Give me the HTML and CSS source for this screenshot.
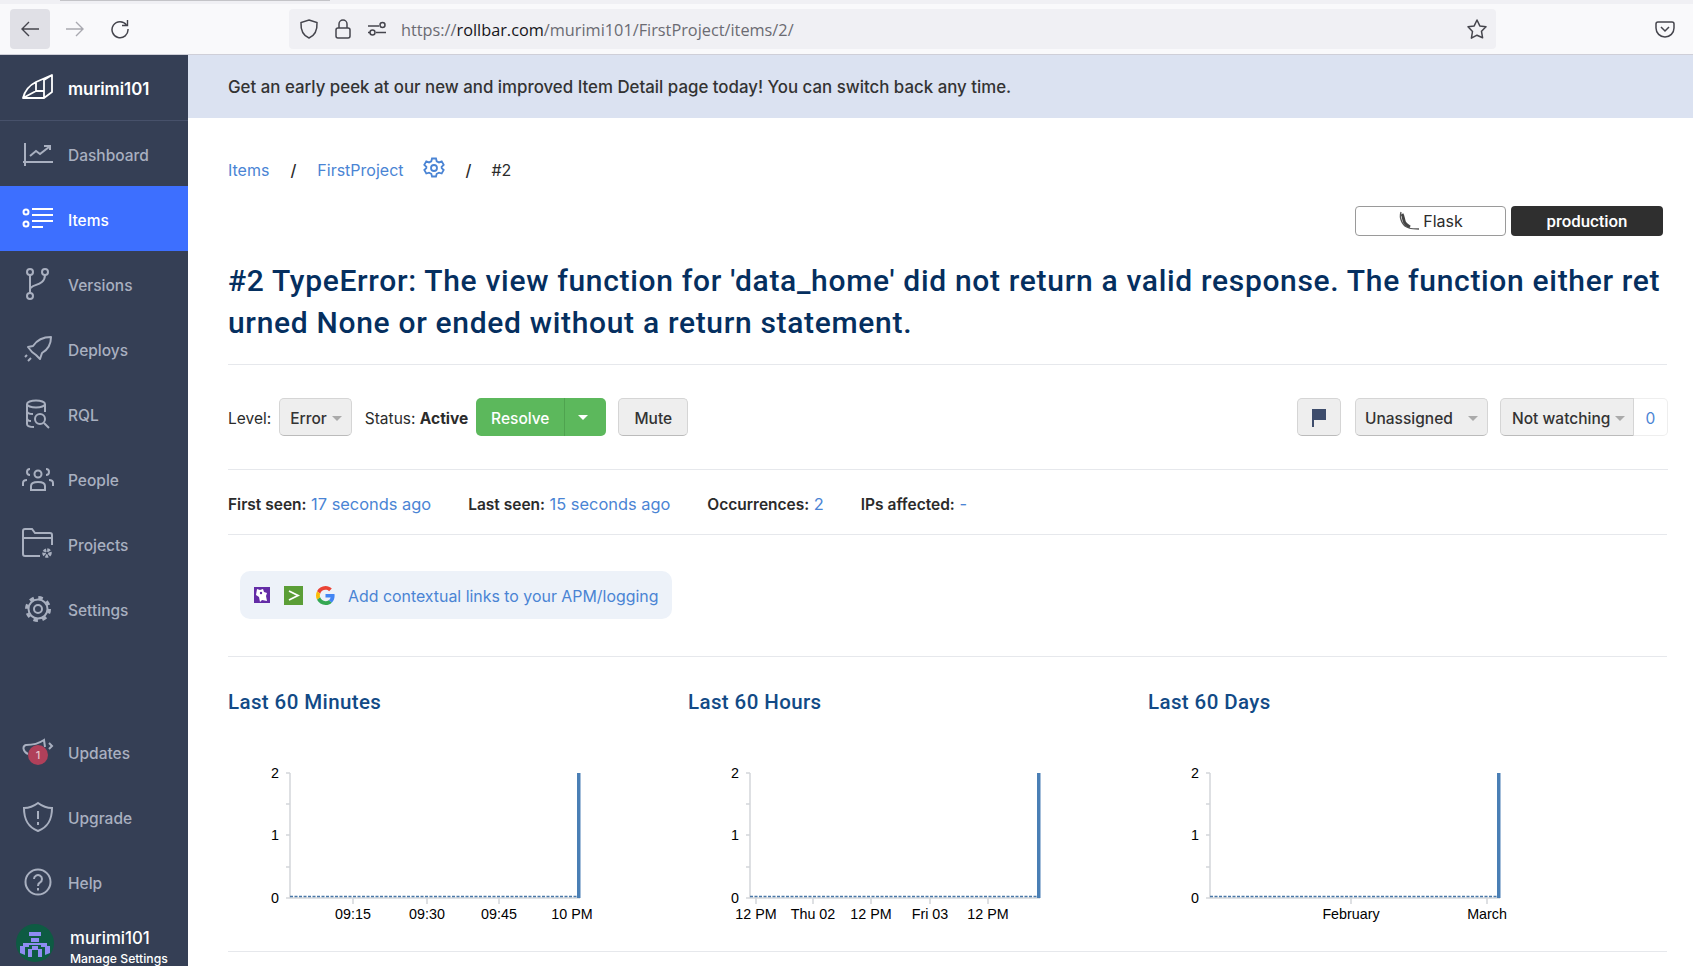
FILE: index.html
```html
<!DOCTYPE html>
<html lang="en">
<head>
    <meta charset="UTF-8">
    <meta name="viewport" content="width=device-width, initial-scale=1.0">
    <title>Rollbar Item</title>
    <link rel="stylesheet" href="styles.css">
</head>
<body>
    <header class="browser">
        <div class="tabstrip"><div class="tabshadow"></div></div>
        <div class="toolbar">
            <button class="navbtn active">
                <svg width="20" height="20" viewBox="0 0 20 20" fill="none" stroke="#45454d" stroke-width="1.4"><path d="M19 10H2M9 3l-7 7 7 7"/></svg>
            </button>
            <button class="navbtn">
                <svg width="20" height="20" viewBox="0 0 20 20" fill="none" stroke="#a9a9b0" stroke-width="1.4"><path d="M1 10h17M11 3l7 7-7 7"/></svg>
            </button>
            <button class="navbtn">
                <svg width="20" height="20" viewBox="0 0 20 20" fill="none" stroke="#45454d" stroke-width="1.5"><path d="M16.5 6A8 8 0 1 0 18 10"/><path d="M17.5 1v5.5H12" stroke-width="1.4"/></svg>
            </button>
            <div class="urlbar">
                <svg class="urlicon" width="20" height="22" viewBox="0 0 20 22" fill="none" stroke="#45454d" stroke-width="1.5"><path d="M10 2l8 2.5c.4 7.500-2 13-8 15.500C4 17.500 1.600 12 2 4.500z"/></svg>
                <svg class="urlicon" width="18" height="22" viewBox="0 0 18 22" fill="none" stroke="#45454d" stroke-width="1.5"><rect x="2" y="10" width="14" height="10" rx="2"/><path d="M5 10V6a4 4 0 0 1 8 0v4"/></svg>
                <svg class="urlicon" width="20" height="16" viewBox="0 0 20 16" fill="none" stroke="#45454d" stroke-width="1.5"><path d="M1 5h11M1 11.500h2M9 11.500h10"/><circle cx="15.500" cy="4" r="2.500"/><circle cx="5.500" cy="11.500" r="2.500"/></svg>
                <span class="url"><span class="urlmuted">https://</span>rollbar.com<span class="urlmuted">/murimi101/FirstProject/items/2/</span></span>
                <svg width="22" height="22" viewBox="0 0 22 22" fill="none" stroke="#45454d" stroke-width="1.5" stroke-linejoin="round"><path d="M11 2l2.800 5.900 6.200.9-4.500 4.500 1.100 6.500L11 17.200l-5.600 3 1.100-6.700L2 8.800l6.200-.9z"/></svg>
            </div>
            <svg class="pocket" width="20" height="18" viewBox="0 0 20 18" fill="none" stroke="#45454d" stroke-width="1.5"><path d="M3 2h14a2 2 0 0 1 2 2v4a9 9 0 0 1-18 0V4a2 2 0 0 1 2-2z"/><path d="M6 7l4 4 4-4"/></svg>
        </div>
    </header>

    <div class="app">
        <nav class="sidebar">
            <div class="brand">
                <svg width="32" height="26" viewBox="0 0 32 26" fill="none" stroke="#fff" stroke-width="1.800" stroke-linejoin="round"><path d="M1 24C3 16 8 11 14 8L30 1v17l-8 6zM14 8v9M22 24V6M1 24l13-7h8M30 1l-8 5"/></svg>
                <span>murimi101</span>
            </div>
            <a class="navitem">
                <svg width="32" height="26" viewBox="0 0 32 26" fill="none" stroke="#a9b0c0" stroke-width="2"><path d="M3 2v23M1 21h30M8 15l6-5 4 3 9-7M22 5h6v4"/></svg>
                <span>Dashboard</span>
            </a>
            <a class="navitem current">
                <svg width="32" height="24" viewBox="0 0 32 24" fill="none" stroke="#fff" stroke-width="2"><circle cx="4" cy="5" r="2.500"/><circle cx="4" cy="17" r="2.500"/><path d="M10 2h21M10 8h21M10 14h21M10 20h11"/></svg>
                <span>Items</span>
            </a>
            <a class="navitem">
                <svg width="32" height="32" viewBox="0 0 32 32" fill="none" stroke="#a9b0c0" stroke-width="2"><circle cx="8" cy="4" r="3"/><circle cx="8" cy="28" r="3"/><circle cx="23" cy="4" r="3"/><path d="M8 7v18M8 21c1-5 15-3 15-14"/></svg>
                <span>Versions</span>
            </a>
            <a class="navitem">
                <svg width="32" height="28" viewBox="0 0 32 28" fill="none" stroke="#a9b0c0" stroke-width="2" stroke-linejoin="round"><path d="M29 2c-8 0-14 3-18 9l-5 1 4 5 4 3 4 4 2-6c7-4 9-9 9-16zM5 20l-2 2M9 23l-3 3"/></svg>
                <span>Deploys</span>
            </a>
            <a class="navitem">
                <svg width="32" height="30" viewBox="0 0 32 30" fill="none" stroke="#a9b0c0" stroke-width="2"><ellipse cx="14" cy="5" rx="9" ry="3.500"/><path d="M5 5v20c0 2 3 3 7 3M23 5v8M5 12c0 2 3 3 6 3M5 19c0 2 2 3 4 3"/><circle cx="18" cy="20" r="5"/><path d="M22 24l5 5"/></svg>
                <span>RQL</span>
            </a>
            <a class="navitem">
                <svg width="32" height="24" viewBox="0 0 32 24" fill="none" stroke="#a9b0c0" stroke-width="2"><circle cx="16" cy="7" r="3.500"/><path d="M9 23v-4c0-3 3-4 7-4s7 1 7 4v4zM8 8a3 3 0 0 1 0-6M24 8a3 3 0 0 0 0-6M1 19v-3c0-2 2-3 4-3M31 19v-3c0-2-2-3-4-3"/></svg>
                <span>People</span>
            </a>
            <a class="navitem">
                <svg width="32" height="32" viewBox="0 0 32 32" fill="none" stroke="#a9b0c0" stroke-width="2"><path d="M18 28H3a2 2 0 0 1-2-2V3a2 2 0 0 1 2-2h7l3 4h15a2 2 0 0 1 2 2v10M1 10h29"/><circle cx="25" cy="25" r="3" stroke-width="3.500" stroke-dasharray="2.500 1"/></svg>
                <span>Projects</span>
            </a>
            <a class="navitem">
                <svg width="32" height="28" viewBox="0 0 28 28" fill="none" stroke="#a9b0c0" stroke-width="2"><circle cx="14" cy="14" r="4"/><circle cx="14" cy="14" r="9.500"/><circle cx="14" cy="14" r="11.500" stroke-width="3" stroke-dasharray="4.500 4.530"/></svg>
                <span>Settings</span>
            </a>

            <div class="spacer"></div>

            <a class="navitem">
                <span class="updateicon">
                    <svg width="32" height="28" viewBox="0 0 32 28" fill="none" stroke="#a9b0c0" stroke-width="2"><path d="M6 16C1 14 0 8 4 7c6 0 12-1 18-5l1 7M27 5l3 3-3 3"/></svg>
                    <span class="badge">1</span>
                </span>
                <span>Updates</span>
            </a>
            <a class="navitem">
                <svg width="32" height="32" viewBox="0 0 32 32" fill="none" stroke="#a9b0c0" stroke-width="2"><path d="M16 2c4 3 9 5 14 5 0 12-4 19-14 23C6 26 2 19 2 7c5 0 10-2 14-5z"/><path d="M16 10v8M16 21v3"/></svg>
                <span>Upgrade</span>
            </a>
            <a class="navitem">
                <svg width="32" height="28" viewBox="0 0 28 28" fill="none" stroke="#a9b0c0" stroke-width="2"><circle cx="14" cy="14" r="12.500"/><path d="M10 11a4 4 0 1 1 6 3.500c-1.500.8-2 1.500-2 3.500M14 20v2.500"/></svg>
                <span>Help</span>
            </a>
            <div class="account">
                <svg class="avatar" width="38" height="38" viewBox="0 0 38 38"><circle cx="19" cy="19" r="19" fill="#0e5b43"/><path fill="#8f8cf2" d="M13 8h12v4H13zM15 14h8v4h-8zM7 19h24v4h-6v-2H13v2H7zM4 22h5v9l-5-2zM29 22h5v7l-5 2zM12 25h4v8h-4zM22 25h4v8h-4zM16 22h6v4h-6z"/></svg>
                <div class="accountinfo">
                    <div class="accountname">murimi101</div>
                    <div class="accountlink">Manage Settings</div>
                </div>
            </div>
        </nav>

        <main class="content">
            <div class="banner">Get an early peek at our new and improved Item Detail page today! You can switch back any time.</div>
            <div class="page">
                <div class="crumbs">
                    <a>Items</a>
                    <span class="slash">/</span>
                    <a class="crumbproject">FirstProject</a>
                    <svg class="crumbgear" width="22" height="22" viewBox="0 0 22 22" fill="none" stroke="#4a84d4" stroke-width="1.800"><circle cx="11" cy="11" r="3"/><path d="M9 1.500h4l.7 2.800 2.300 1.100 2.700-1 2 3.400-2.100 2 .1 1.300 2 1.900-2 3.500-2.700-.9-2.300 1.200-.7 2.700H9l-.7-2.700L6 15.600l-2.700.9-2-3.500 2-1.900.1-1.300-2.100-2 2-3.400 2.700 1 2.300-1.100z"/></svg>
                    <span class="slash slash-last">/</span>
                    <span class="crumbid">#2</span>
                </div>

                <div class="chips">
                    <span class="chip chip-flask">
                        <svg width="22" height="20" viewBox="0 0 22 20" fill="none" stroke="#555" stroke-width="1.300"><path d="M3 1c-2 6 1 14 8 16 3 1 6 1 10 1"/><path d="M4 3c2 3 1 6 3 9 1 2 3 3 5 4" stroke-width="3" stroke="#444"/></svg>
                        Flask
                    </span>
                    <span class="chip chip-env">production</span>
                </div>

                <h1 class="itemtitle">#2 TypeError: The view function for 'data_home' did not return a valid response. The function either returned None or ended without a return statement.</h1>

                <div class="actions">
                    <span class="label">Level:</span>
                    <button class="btn level">Error <i class="caret"></i></button>
                    <span class="label status">Status: <b>Active</b></span>
                    <div class="resolve">
                        <button class="resolvemain">Resolve</button>
                        <button class="resolvecaret"><i class="caret caret-white"></i></button>
                    </div>
                    <button class="btn mute">Mute</button>
                    <div class="actions-right">
                        <button class="btn flagbtn">
                            <svg width="16" height="20" viewBox="0 0 16 20"><path fill="#3e4d6c" d="M1 1h14v11H3v7H1z"/></svg>
                        </button>
                        <button class="btn assign">Unassigned <i class="caret"></i></button>
                        <div class="watch">
                            <button class="btn watchbtn">Not watching <i class="caret"></i></button>
                            <a class="watchcount">0</a>
                        </div>
                    </div>
                </div>

                <div class="meta">
                    <span><b>First seen:</b> <a>17 seconds ago</a></span>
                    <span><b>Last seen:</b> <a>15 seconds ago</a></span>
                    <span><b>Occurrences:</b> <a>2</a></span>
                    <span><b>IPs affected:</b> <a>-</a></span>
                </div>

                <div class="linksrow">
                    <div class="linkspill">
                        <svg width="18" height="18" viewBox="0 0 18 18"><rect x="1" y="1" width="16" height="16" fill="#632ca6"/><path fill="#fff" d="M4 3l3 1 3-1 1 3 3 1-1 3 1 5-5-1-2 2-1-5-3-2z"/><circle cx="8" cy="7" r="1.200" fill="#632ca6"/></svg>
                        <svg width="19" height="19" viewBox="0 0 19 19"><rect width="19" height="19" fill="#5b9e37"/><path d="M5 5l9 4.500L5 14" fill="none" stroke="#fff" stroke-width="1.800"/></svg>
                        <svg width="19" height="19" viewBox="0 0 48 48"><path fill="#ea4335" d="M24 9.500c3.500 0 6.700 1.300 9.100 3.500l6.800-6.800C35.800 2.400 30.200 0 24 0 14.600 0 6.500 5.400 2.600 13.200l7.900 6.200C12.400 13.700 17.700 9.500 24 9.500z"/><path fill="#4285f4" d="M47 24.500c0-1.600-.2-3.100-.4-4.500H24v9h12.900c-.6 3-2.300 5.500-4.800 7.200l7.700 6c4.500-4.200 7.200-10.300 7.200-17.700z"/><path fill="#fbbc05" d="M10.500 28.600c-.5-1.400-.8-3-.8-4.600s.3-3.200.8-4.600l-7.900-6.200C.9 16.500 0 20.100 0 24s.9 7.500 2.600 10.800z"/><path fill="#34a853" d="M24 48c6.500 0 11.900-2.100 15.800-5.800l-7.700-6c-2.100 1.400-4.900 2.300-8.100 2.300-6.300 0-11.600-4.200-13.500-9.900l-7.900 6.200C6.500 42.600 14.600 48 24 48z"/></svg>
                        <a>Add contextual links to your APM/logging</a>
                    </div>
                </div>

                <div class="charts">
                    <section class="chartcol">
                        <h3>Last 60 Minutes</h3>
                        <svg class="chart" width="400" height="175" viewBox="0 0 400 175">
                            <g class="axis">
                                <path d="M62 13v125h290M58 13h4M58 44h4M58 75h4M58 107h4M58 138h4M125 138v6M199 138v6M271 138v6"/>
                            </g>
                            <path class="line" d="M62 136.500h288"/>
                            <rect class="bar" x="349" y="13" width="3.500" height="125"/>
                            <g class="ticks">
                                <text x="51" y="18" text-anchor="end">2</text>
                                <text x="51" y="80" text-anchor="end">1</text>
                                <text x="51" y="143" text-anchor="end">0</text>
                                <text x="125" y="159" text-anchor="middle">09:15</text>
                                <text x="199" y="159" text-anchor="middle">09:30</text>
                                <text x="271" y="159" text-anchor="middle">09:45</text>
                                <text x="344" y="159" text-anchor="middle">10 PM</text>
                            </g>
                        </svg>
                    </section>
                    <section class="chartcol">
                        <h3>Last 60 Hours</h3>
                        <svg class="chart" width="400" height="175" viewBox="0 0 400 175">
                            <g class="axis">
                                <path d="M62 13v125h290M58 13h4M58 44h4M58 75h4M58 107h4M58 138h4M68 138v6M125 138v6M183 138v6M242 138v6M300 138v6"/>
                            </g>
                            <path class="line" d="M62 136.500h288"/>
                            <rect class="bar" x="349" y="13" width="3.500" height="125"/>
                            <g class="ticks">
                                <text x="51" y="18" text-anchor="end">2</text>
                                <text x="51" y="80" text-anchor="end">1</text>
                                <text x="51" y="143" text-anchor="end">0</text>
                                <text x="68" y="159" text-anchor="middle">12 PM</text>
                                <text x="125" y="159" text-anchor="middle">Thu 02</text>
                                <text x="183" y="159" text-anchor="middle">12 PM</text>
                                <text x="242" y="159" text-anchor="middle">Fri 03</text>
                                <text x="300" y="159" text-anchor="middle">12 PM</text>
                            </g>
                        </svg>
                    </section>
                    <section class="chartcol">
                        <h3>Last 60 Days</h3>
                        <svg class="chart" width="400" height="175" viewBox="0 0 400 175">
                            <g class="axis">
                                <path d="M62 13v125h290M58 13h4M58 44h4M58 75h4M58 107h4M58 138h4M203 138v6M339 138v6"/>
                            </g>
                            <path class="line" d="M62 136.500h288"/>
                            <rect class="bar" x="349" y="13" width="3.500" height="125"/>
                            <g class="ticks">
                                <text x="51" y="18" text-anchor="end">2</text>
                                <text x="51" y="80" text-anchor="end">1</text>
                                <text x="51" y="143" text-anchor="end">0</text>
                                <text x="203" y="159" text-anchor="middle">February</text>
                                <text x="339" y="159" text-anchor="middle">March</text>
                            </g>
                        </svg>
                    </section>
                </div>
            </div>
        </main>
    </div>
</body>
</html>
```

FILE: styles.css
```css
* {
    box-sizing: border-box;
}
html, body {
    height: 100%;
}
body {
    margin: 0;
    overflow: hidden;
    font-family: Inter, "Liberation Sans", sans-serif;
    font-size: 15px;
    color: #2b2b2b;
    background: #fff;
}
a {
    color: #4a84d4;
    text-decoration: none;
}
button {
    font: inherit;
}

/* browser chrome */
.browser {
    height: 55px;
    background: #f9f9fb;
    border-bottom: 1px solid #cfcfd8;
}
.tabstrip {
    height: 4px;
    background: #f0f0f4;
    padding-left: 60px;
}
.tabshadow {
    width: 270px;
    height: 1px;
    background: #c4c4c8;
}
.toolbar {
    height: 50px;
    display: flex;
    align-items: center;
    padding: 0 0 0 10px;
}
.navbtn {
    width: 40px;
    height: 40px;
    margin-right: 5px;
    border: none;
    border-radius: 4px;
    background: transparent;
    display: flex;
    align-items: center;
    justify-content: center;
    padding: 0;
}
.navbtn.active {
    background: #e0e0e6;
}
.urlbar {
    width: 1207px;
    height: 40px;
    margin-left: 144px;
    padding: 0 8px 0 10px;
    background: #f0f0f4;
    border-radius: 4px;
    display: flex;
    align-items: center;
}
.urlicon {
    margin-right: 15px;
}
.url {
    flex: 1;
    padding-top: 2px;
    margin-left: -1px;
    font-family: "Open Sans", "Noto Sans", sans-serif;
    font-size: 16.300px;
    color: #15141a;
}
.urlmuted {
    color: #6b6b72;
}
.pocket {
    margin-left: 159px;
}

/* layout */
.app {
    display: flex;
    height: 911px;
}
.sidebar {
    width: 188px;
    flex: none;
    background: #353f55;
    display: flex;
    flex-direction: column;
    overflow: hidden;
}
.content {
    flex: 1;
    min-width: 0;
}

/* sidebar */
.brand {
    height: 66px;
    flex: none;
    display: flex;
    align-items: center;
    gap: 14px;
    padding-left: 22px;
    padding-bottom: 2px;
    border-bottom: 1px solid #47516a;
    color: #fff;
    font-weight: 600;
    font-size: 16.800px;
}
.brand span {
    padding-top: 4px;
}
.navitem {
    height: 65px;
    flex: none;
    display: flex;
    align-items: center;
    gap: 14px;
    padding-left: 22px;
    color: #a9b0c0;
    font-weight: 500;
    font-size: 15.500px;
}
.navitem > span:last-child {
    padding-top: 4px;
}
.navitem.current {
    background: #3d6fff;
    color: #fff;
}
.spacer {
    flex: 1;
}
.updateicon {
    position: relative;
    display: flex;
}
.badge {
    position: absolute;
    left: 6px;
    top: 7px;
    width: 20px;
    height: 20px;
    border-radius: 50%;
    background: #b0405a;
    color: #e6c4cc;
    font-size: 11px;
    text-align: center;
    line-height: 20px;
}
.account {
    height: 52px;
    flex: none;
    display: flex;
    gap: 16px;
    padding: 14px 0 0 16px;
}
.avatar {
    flex: none;
    margin-top: -4px;
}
.accountname {
    color: #fff;
    font-weight: 500;
    font-size: 16.800px;
    line-height: 20px;
}
.accountlink {
    color: #fff;
    font-weight: 500;
    font-size: 12.200px;
    line-height: 20px;
    margin-top: 1px;
    white-space: nowrap;
}

/* banner */
.banner {
    height: 63px;
    padding-left: 40px;
    background: #dbe2f1;
    display: flex;
    align-items: center;
    font-size: 16.850px;
    font-weight: 500;
    color: #333;
}
.page {
    padding: 0 26px 0 40px;
}

/* breadcrumbs */
.crumbs {
    display: flex;
    align-items: center;
    height: 24px;
    margin-top: 40px;
    font-size: 16px;
}
.slash {
    margin: 0 21px;
    font-weight: 500;
}
.slash-last {
    margin: 0 20px 0 21px;
}
.crumbgear {
    margin: -4px 0 0 19px;
}
.crumbs a {
    color: #4a84d4;
}

/* chips */
.chips {
    display: flex;
    justify-content: flex-end;
    gap: 5px;
    margin-top: 24px;
    padding-right: 4px;
}
.chip {
    height: 30px;
    border-radius: 4px;
    display: flex;
    align-items: center;
    justify-content: center;
    font-size: 16px;
}
.chip-flask {
    width: 151px;
    border: 1px solid #9a9a9a;
    gap: 3px;
}
.chip-env {
    width: 152px;
    background: #2f2f2f;
    color: #fff;
    font-family: Roboto, sans-serif;
    font-size: 16.800px;
    font-weight: 500;
}

.itemtitle {
    margin: 24px 0 0;
    padding-bottom: 20px;
    border-bottom: 1px solid #e6e8ec;
    font-family: Roboto, sans-serif;
    font-size: 30px;
    font-weight: 500;
    line-height: 42px;
    letter-spacing: 0.68px;
    color: #052f5f;
    word-break: break-all;
}

/* actions row */
.actions {
    display: flex;
    align-items: center;
    height: 105px;
    margin-right: -1px;
    border-bottom: 1px solid #e6e8ec;
}
.label {
    font-size: 15.500px;
    padding-top: 2px;
}
.btn {
    height: 38px;
    padding: 2px 11px 0;
    border: 1px solid #d5d5d5;
    border-bottom-color: #bbb;
    border-radius: 5px;
    background: #eee;
    color: #333;
    font-size: 15.500px;
    font-weight: 500;
    display: inline-flex;
    align-items: center;
    white-space: nowrap;
}
.caret {
    display: inline-block;
    width: 0;
    height: 0;
    margin-left: 5px;
    border-left: 5px solid transparent;
    border-right: 5px solid transparent;
    border-top: 5px solid #aaa;
}
.caret-white {
    margin: 0;
    border-top-color: #fff;
}
.level {
    margin-left: 8px;
    padding: 2px 9px 0 10px;
}
.status {
    margin-left: 13px;
}
.resolve {
    display: flex;
    margin-left: 8px;
}
.resolvemain, .resolvecaret {
    height: 38px;
    border: none;
    background: #5cb85c;
    color: #fff;
    font-size: 15.500px;
    font-weight: 500;
    padding-top: 3px;
}
.resolvemain {
    width: 89px;
    border-radius: 5px 0 0 5px;
    border-right: 1px solid #4fa34f;
}
.resolvecaret {
    width: 41px;
    border-radius: 0 5px 5px 0;
    display: flex;
    align-items: center;
    justify-content: center;
    padding: 0 6px 0 0;
}
.mute {
    margin-left: 12px;
    width: 70px;
    justify-content: center;
}
.actions-right {
    margin-left: auto;
    display: flex;
    align-items: center;
}
.flagbtn {
    width: 44px;
    justify-content: center;
    margin-right: 14px;
}
.assign {
    width: 133px;
    padding: 2px 9px 0 9px;
    justify-content: space-between;
    margin-right: 12px;
}
.watch {
    display: flex;
}
.watchbtn {
    width: 134px;
    border-radius: 5px 0 0 5px;
    justify-content: space-between;
    padding-right: 10px;
}
.watchcount {
    width: 34px;
    height: 38px;
    border: 1px solid #eee;
    border-left: none;
    border-radius: 0 5px 5px 0;
    display: flex;
    align-items: center;
    justify-content: center;
    font-size: 15.500px;
    padding-top: 2px;
}

/* first seen row */
.meta {
    display: flex;
    align-items: center;
    gap: 37px;
    height: 65px;
    padding-top: 4px;
    border-bottom: 1px solid #e6e8ec;
    font-size: 16.400px;
}
.meta b {
    font-size: 15.500px;
    font-weight: 600;
}

/* contextual links */
.linksrow {
    padding: 36px 0 37px 12px;
    border-bottom: 1px solid #e6e8ec;
}
.linkspill {
    display: inline-flex;
    align-items: center;
    gap: 13px;
    width: 432px;
    height: 48px;
    padding-left: 13px;
    background: #edf2f9;
    border-radius: 10px;
    font-size: 15.900px;
}
.linkspill a {
    padding-top: 2px;
}

/* charts */
.charts {
    display: flex;
    height: 295px;
    border-bottom: 1px solid #e6e8ec;
}
.chartcol {
    width: 460px;
}
.chartcol h3 {
    margin: 33px 0 0;
    height: 24px;
    line-height: 24px;
    font-family: Roboto, sans-serif;
    font-size: 20.500px;
    font-weight: 500;
    letter-spacing: 0.4px;
    color: #124a86;
}
.chart {
    display: block;
    margin-top: 46px;
}
.axis path {
    fill: none;
    stroke: #d3d6da;
    stroke-width: 1.500;
}
.line {
    fill: none;
    stroke: #4a78a8;
    stroke-width: 1.500;
    stroke-dasharray: 3 1.500;
}
.bar {
    fill: #4a7fb5;
}
.ticks text {
    font-family: "Liberation Sans", sans-serif;
    font-size: 14.300px;
    fill: #000;
}
```
